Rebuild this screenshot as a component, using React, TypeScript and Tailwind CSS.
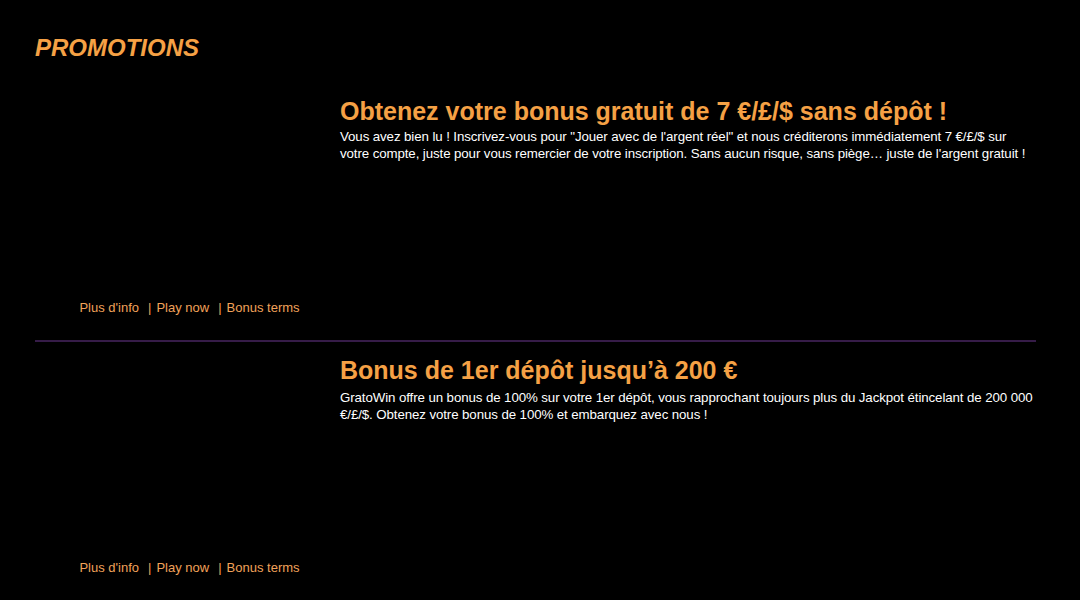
import React from "react";

const promos = [
  {
    title: "Obtenez votre bonus gratuit de 7 €/£/$ sans dépôt !",
    lines: [
      "Vous avez bien lu ! Inscrivez-vous pour \"Jouer avec de l'argent réel\" et nous créditerons immédiatement 7 €/£/$ sur",
      "votre compte, juste pour vous remercier de votre inscription. Sans aucun risque, sans piège… juste de l'argent gratuit !",
    ],
  },
  {
    title: "Bonus de 1er dépôt jusqu’à 200 €",
    lines: [
      "GratoWin offre un bonus de 100% sur votre 1er dépôt, vous rapprochant toujours plus du Jackpot étincelant de 200 000",
      "€/£/$. Obtenez votre bonus de 100% et embarquez avec nous !",
    ],
  },
];

export default function App() {
  return (
    <div
      className="min-h-[600px] w-[1080px] bg-black pl-[35px] pt-[34px]"
      style={{ fontFamily: "'Liberation Sans', Arial, sans-serif" }}
    >
      <h1 className="text-[24px] font-bold italic leading-[28px] text-[#f5a145]">PROMOTIONS</h1>
      <div className="mt-[18px] w-[1001px]">
        {promos.map((p, i) => (
          <div key={i}>
            {i > 0 && <div className="h-[2px] bg-[#361c48]" />}
            <div className={`flex ${i === 0 ? "h-[260px] pt-[14px]" : "h-[258px] pt-[12px]"}`}>
              <div className="flex w-[309px] shrink-0 flex-col justify-end pb-[25px]">
                <div className="flex justify-center text-[13px] leading-[15px] text-[#f0a25a]">
                  <span>Plus d'info</span>
                  <span className="ml-[9px]">|</span>
                  <span className="ml-[5px]">Play now</span>
                  <span className="ml-[9px]">|</span>
                  <span className="ml-[5px]">Bonus terms</span>
                </div>
              </div>
              <div className="-ml-[4px] -mr-[10px] flex-1">
                <h2
                  className={`text-[25px] font-bold leading-[32px] text-[#f5a145] ${
                    i === 0 ? "mt-[1px]" : "mt-0"
                  }`}
                >
                  {p.title}
                </h2>
                <p
                  className={`text-[13.3px] leading-[17px] tracking-[-0.1px] text-white ${
                    i === 0 ? "mt-[1px]" : "mt-[3px]"
                  }`}
                >
                  {p.lines.map((l, j) => (
                    <span key={j} className="block whitespace-nowrap">
                      {l}
                    </span>
                  ))}
                </p>
              </div>
            </div>
          </div>
        ))}
      </div>
    </div>
  );
}
